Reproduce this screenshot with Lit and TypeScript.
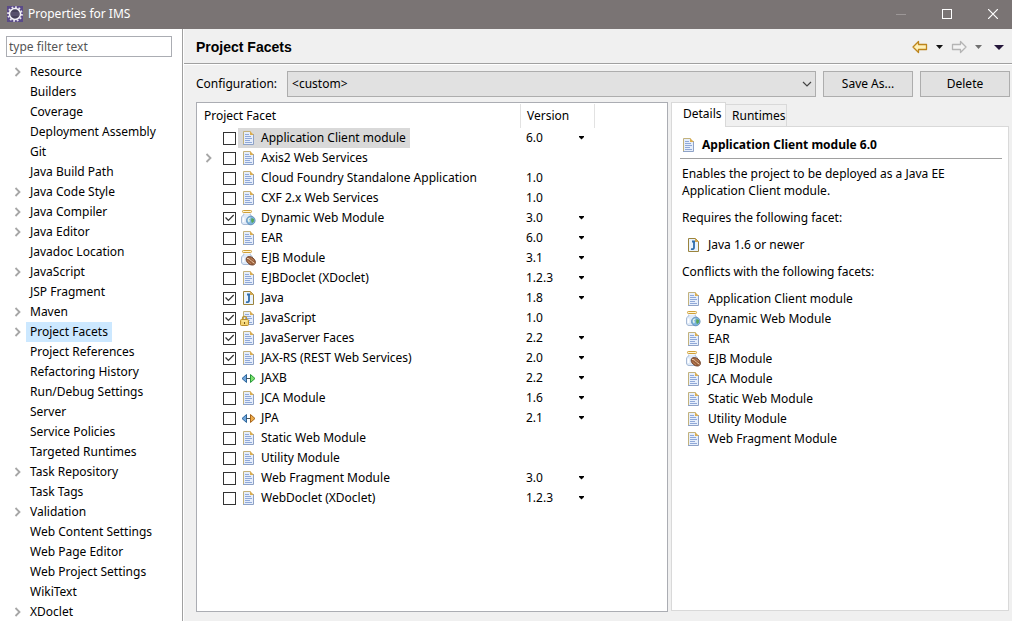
import { LitElement, html, css, svg, nothing } from "lit";
import { customElement, property } from "lit/decorators.js";
import { classMap } from "lit/directives/class-map.js";

interface Page {
  label: string;
  children?: boolean;
  selected?: boolean;
}

interface Facet {
  name: string;
  icon: string;
  version?: string;
  choices?: boolean;
  checked?: boolean;
  children?: boolean;
  selected?: boolean;
}

const PAGES: Page[] = [
  { label: "Resource", children: true },
  { label: "Builders" },
  { label: "Coverage" },
  { label: "Deployment Assembly" },
  { label: "Git" },
  { label: "Java Build Path" },
  { label: "Java Code Style", children: true },
  { label: "Java Compiler", children: true },
  { label: "Java Editor", children: true },
  { label: "Javadoc Location" },
  { label: "JavaScript", children: true },
  { label: "JSP Fragment" },
  { label: "Maven", children: true },
  { label: "Project Facets", children: true, selected: true },
  { label: "Project References" },
  { label: "Refactoring History" },
  { label: "Run/Debug Settings" },
  { label: "Server" },
  { label: "Service Policies" },
  { label: "Targeted Runtimes" },
  { label: "Task Repository", children: true },
  { label: "Task Tags" },
  { label: "Validation", children: true },
  { label: "Web Content Settings" },
  { label: "Web Page Editor" },
  { label: "Web Project Settings" },
  { label: "WikiText" },
  { label: "XDoclet", children: true },
];

const FACETS: Facet[] = [
  { name: "Application Client module", icon: "doc", version: "6.0", choices: true, selected: true },
  { name: "Axis2 Web Services", icon: "doc", children: true },
  { name: "Cloud Foundry Standalone Application", icon: "doc", version: "1.0" },
  { name: "CXF 2.x Web Services", icon: "doc", version: "1.0" },
  { name: "Dynamic Web Module", icon: "web", version: "3.0", choices: true, checked: true },
  { name: "EAR", icon: "doc", version: "6.0", choices: true },
  { name: "EJB Module", icon: "ejb", version: "3.1", choices: true },
  { name: "EJBDoclet (XDoclet)", icon: "doc", version: "1.2.3", choices: true },
  { name: "Java", icon: "java", version: "1.8", choices: true, checked: true },
  { name: "JavaScript", icon: "locked", version: "1.0", checked: true },
  { name: "JavaServer Faces", icon: "doc", version: "2.2", choices: true, checked: true },
  { name: "JAX-RS (REST Web Services)", icon: "doc", version: "2.0", choices: true, checked: true },
  { name: "JAXB", icon: "jaxb", version: "2.2", choices: true },
  { name: "JCA Module", icon: "doc", version: "1.6", choices: true },
  { name: "JPA", icon: "jpa", version: "2.1", choices: true },
  { name: "Static Web Module", icon: "doc" },
  { name: "Utility Module", icon: "doc" },
  { name: "Web Fragment Module", icon: "doc", version: "3.0", choices: true },
  { name: "WebDoclet (XDoclet)", icon: "doc", version: "1.2.3", choices: true },
];

const CONFLICTS = [
  { name: "Application Client module", icon: "doc" },
  { name: "Dynamic Web Module", icon: "web" },
  { name: "EAR", icon: "doc" },
  { name: "EJB Module", icon: "ejb" },
  { name: "JCA Module", icon: "doc" },
  { name: "Static Web Module", icon: "doc" },
  { name: "Utility Module", icon: "doc" },
  { name: "Web Fragment Module", icon: "doc" },
];

const sheet = svg`
  <path d="M3.5 1.5h7l3 3v10h-10z" fill="#e6eefb"/>
  <path d="M3.5 14V1.5h7" fill="none" stroke="#c3b27c"/>
  <path d="M13.5 4v10.5H3" fill="none" stroke="#8ea2c6"/>
  <path d="M10 1l4 4h-4z" fill="#d9ad52"/>
  <path d="M5 4.5h4M5 6.5h6M5 8.5h7M5 10.5h5M5 12.5h7" stroke="#8fa8d8"/>`;

const jar = svg`
  <path d="M4 3v1.500C2.500 5.500 1.500 6.500 1.500 8v4c0 1.500 1 2.500 2.500 2.500h6c1.500 0 2.500-1 2.500-2.500V8c0-1.500-1-2.500-2.500-3.500V3z" fill="#dfeaf8" stroke="#9db2d0" stroke-width=".9"/>
  <path d="M3.500 7.500v4.500" stroke="#fff" stroke-width="1.800"/>
  <path d="M3.500 3.500h7" stroke="#f3f6fa"/>
  <rect x="2.500" y=".5" width="9" height="2" rx=".8" fill="#fff6d4" stroke="#d0a03a"/>`;

const arrows = (right: string, edge: string) => svg`
  <path d="M6.500 4.500v8L2 8.500z" fill="#70a8e0" stroke="#2c6499"/>
  <path d="M6 8.500h5" stroke="#44535c"/>
  <path d="M10.500 4.500v8L15 8.500z" fill=${right} stroke=${edge}/>`;

const ICONS: Record<string, unknown> = {
  doc: sheet,
  web: svg`${jar}
    <circle cx="10.800" cy="10.500" r="4.300" fill="#7db4de" stroke="#5a86b0" stroke-width=".8"/>
    <path d="M8 8.500c1.500-1.500 3-1.300 2.500-.2L9 9.500l1 1.500-1 1.500C7.800 11.500 7.500 10 8 8.500z" fill="#e4f2e4"/>
    <path d="M11.500 8l2.500 1-.2 2.500-1.800 1.700-.9-2.500z" fill="#57a657"/>`,
  ejb: svg`${jar}
    <ellipse cx="10.800" cy="10.800" rx="5.200" ry="3.600" transform="rotate(38 10.800 10.800)" fill="#9a603c" stroke="#6d4029" stroke-width=".8"/>
    <path d="M7 8.300c3.500.2 3.500 3 7.500 5" fill="none" stroke="#f1cda9"/>
    <path d="M7.500 11l3.500 2.800M10.500 8l3.500 2.500" stroke="#c48a61" stroke-width=".8"/>`,
  java: svg`
    <path d="M3.500 1.500h7l3 3v10h-10z" fill="#e9f3fd" stroke="#9b843e"/>
    <path d="M10 1l4 4h-4z" fill="#d2a74f"/>
    <path d="M7 4.500h3M9 4v6.500c0 1.500-1 2-3 1.500" fill="none" stroke="#2f6caa" stroke-width="1.800"/>`,
  locked: svg`${sheet}
    <path d="M2.500 10V8.500a2 2 0 0 1 4 0V10" fill="none" stroke="#b8963a" stroke-width="1.300"/>
    <rect x=".5" y="9.500" width="8" height="6" rx="1" fill="#f3d474" stroke="#b98d2c"/>
    <path d="M2 11h5" stroke="#fff0ab"/><path d="M4.500 12v2" stroke="#73551c"/>`,
  jaxb: arrows("#7fe36d", "#28993a"),
  jpa: arrows("#efae4c", "#a8661c"),
};

const icon = (name: string) =>
  html`<svg class="icon" width="16" height="16" viewBox="0 0 16 16" aria-hidden="true">${ICONS[name]}</svg>`;

const chevron = html`<svg class="chevron" width="8" height="10" viewBox="0 0 8 10" aria-hidden="true">
  <path d="M1.500 1l4 4-4 4" fill="none" stroke="#a6a6a6" stroke-width="1.800" />
</svg>`;

const caret = (color: string, w = 5) => html`<svg class="caret" width="7" height="4" viewBox="0 0 7 4" aria-hidden="true">
  <path d=${w > 5 ? "M0 0h7L3.500 4z" : "M1 0h5v1L3.500 3.500 1 1z"} fill=${color} />
</svg>`;

const shared = css`
  * { box-sizing: border-box; }
  button, input, select { font: inherit; color: inherit; margin: 0; border-radius: 0; }
  select, input { appearance: none; }
  svg { display: block; flex: none; }
  .plain { border: 0; padding: 0; background: none; }
`;

@customElement("page-tree")
class PageTree extends LitElement {
  static styles = [shared, css`
    :host { display: block; padding: 7px 10px 0 6px; background: #fff; overflow: hidden; }
    .filter { display: block; width: 100%; height: 21px; border: 1px solid #abadb3; padding: 0 2px; outline: 0; background: #fff; }
    .filter::placeholder { color: #555; opacity: 1; }
    .tree { list-style: none; margin: 5px 0 0; padding: 0; }
    .node { display: flex; align-items: center; height: 20px; }
    .twist { width: 20px; padding-left: 8px; }
    .link { color: #000; text-decoration: none; line-height: 20px; padding: 0 4px; white-space: nowrap; }
    .selected { background: #cce8ff; }
  `];

  render() {
    return html`
      <input class="filter" type="text" aria-label="Filter" placeholder="type filter text" />
      <ul class="tree">
        ${PAGES.map((p) => html`<li class="node">
          <span class="twist">${p.children ? chevron : nothing}</span>
          <a class=${classMap({ link: true, selected: !!p.selected })} href="#">${p.label}</a>
        </li>`)}
      </ul>`;
  }
}

@customElement("facet-table")
class FacetTable extends LitElement {
  static styles = [shared, css`
    :host { display: block; background: #fff; border: 1px solid #abadb3; overflow: hidden; }
    .grid { width: 100%; border-collapse: collapse; table-layout: fixed; }
    .facet-col { width: 324px; }
    .version-col { width: 74px; }
    th { height: 25px; padding: 0 7px; font-weight: 400; text-align: left; }
    th + th { padding: 0 6px; }
    .split { background: linear-gradient(#e2e2e2, #e2e2e2) right 1px / 1px 24px no-repeat; }
    td { height: 20px; padding: 0; line-height: 20px; }
    .cell { display: flex; align-items: center; height: 20px; }
    .twist { width: 26px; padding-left: 8px; flex: none; }
    .check { width: 13px; height: 13px; border: 1px solid #333; background: #fff; display: grid; flex: none; }
    .check:checked::before { content: ""; background: #333; clip-path: polygon(10% 50%, 18% 42%, 40% 64%, 84% 18%, 92% 27%, 40% 80%); }
    .name { display: flex; align-items: center; gap: 5px; height: 20px; margin-left: 2px; padding: 0 4px 0 2px; white-space: nowrap; }
    .selected .name { background: #d9d9d9; }
    .version { padding-left: 5px; }
    .pick { display: grid; align-items: center; width: 59px; }
    .pick > * { grid-area: 1 / 1; }
    .pick .caret { justify-self: end; pointer-events: none; }
    .pick select { height: 20px; width: 100%; }
  `];

  render() {
    return html`<table class="grid">
      <colgroup><col class="facet-col" /><col class="version-col" /><col /></colgroup>
      <thead><tr>
        <th class="split" scope="col">Project Facet</th>
        <th class="split" scope="col">Version</th>
        <td></td>
      </tr></thead>
      <tbody>
        ${FACETS.map((f, i) => html`<tr class=${classMap({ selected: !!f.selected })}>
          <td><div class="cell">
            <span class="twist">${f.children ? chevron : nothing}</span>
            <input class="check" type="checkbox" id="facet-${i}" .checked=${!!f.checked} />
            <label class="name" for="facet-${i}">${icon(f.icon)}${f.name}</label>
          </div></td>
          <td class="version">${f.choices
            ? html`<div class="pick">
                <select class="plain" aria-label="${f.name} version"><option>${f.version}</option></select>
                ${caret("#000")}
              </div>`
            : f.version ?? nothing}</td>
          <td></td>
        </tr>`)}
      </tbody>
    </table>`;
  }
}

@customElement("facet-details")
class FacetDetails extends LitElement {
  @property() heading = "Application Client module 6.0";

  static styles = [shared, css`
    :host { display: flex; flex-direction: column; min-width: 0; }
    .tabs { display: flex; align-items: flex-end; height: 25px; margin-bottom: -1px; }
    .tab { border: 1px solid #d9d9d9; background: #f0f0f0; width: 61px; height: 23px; padding: 0; line-height: 20px; text-align: left; white-space: nowrap; }
    .tab.active { width: 55px; height: 25px; background: #fff; border-bottom: 0; padding: 0 0 2px 11px; z-index: 1; }
    .tab:not(.active) { border-left: 0; padding-left: 6px; }
    .panel { flex: 1; border: 1px solid #d9d9d9; background: #fff; padding: 9px 6px 0 8px; }
    .title { display: flex; align-items: center; gap: 6px; height: 23px; margin: 0; padding: 0 0 5px; border-bottom: 1px solid #a0a0a0; font-size: 12px; font-weight: 700; }
    .body { padding: 0 2px; }
    p { margin: 6px 0 9px; line-height: 17px; }
    p + p { margin-top: 10px; }
    ul + p { margin-top: 8px; }
    ul { list-style: none; margin: 0; padding: 0 0 0 3px; }
    li { display: flex; align-items: center; gap: 7px; height: 20px; }
  `];

  render() {
    return html`
      <div class="tabs" role="tablist">
        <button class="tab active" role="tab" aria-selected="true">Details</button>
        <button class="tab" role="tab" aria-selected="false">Runtimes</button>
      </div>
      <section class="panel">
        <h2 class="title">${icon("doc")}${this.heading}</h2>
        <div class="body">
          <p>Enables the project to be deployed as a Java EE Application Client module.</p>
          <p>Requires the following facet:</p>
          <ul><li>${icon("java")}Java 1.6 or newer</li></ul>
          <p>Conflicts with the following facets:</p>
          <ul>${CONFLICTS.map((c) => html`<li>${icon(c.icon)}${c.name}</li>`)}</ul>
        </div>
      </section>`;
  }
}

@customElement("app-root")
class AppRoot extends LitElement {
  static styles = [shared, css`
    :host {
      display: flex; flex-direction: column; height: 100vh; overflow: hidden;
      background: #f0f0f0; color: #000;
      font: 12px/20px "Noto Sans", "Noto Sans CJK SC", sans-serif;
    }
    .titlebar { display: flex; align-items: center; height: 29px; flex: none; background: #7a7474; color: #fff; padding-left: 7px; gap: 8px; }
    .brand { flex: 1; display: flex; align-items: center; gap: 5px; padding-bottom: 2px; }
    .win { width: 38px; height: 27px; display: grid; place-items: center; align-self: flex-start; }
    .content { flex: 1; min-height: 0; display: grid; grid-template-columns: 182px 1fr; }
    .main { display: flex; flex-direction: column; min-width: 0; border-left: 1px solid #a0a0a0; box-shadow: inset 1px 0 #fff; padding-left: 1px; }
    .head { display: flex; align-items: center; height: 35px; flex: none; padding: 2px 8px 0 12px; border-bottom: 1px solid #a0a0a0; box-shadow: 0 1px #fff; }
    .heading { flex: 1; margin: 0; font: 700 14px/20px "Liberation Sans", Arial, sans-serif; }
    .nav { display: flex; align-items: center; gap: 8px; }
    .nav button { display: grid; }
    .nav .menu { padding-left: 4px; }
    .config { display: flex; align-items: center; padding: 7px 2px 0 12px; gap: 7px; }
    .combo { flex: 1; display: grid; align-items: center; margin-left: 3px; }
    .combo > * { grid-area: 1 / 1; }
    .combo select { height: 26px; width: 100%; border: 1px solid #adadad; background: #e1e1e1; padding: 0 4px; }
    .combo svg { justify-self: end; margin-right: 4px; pointer-events: none; }
    .push { width: 90px; height: 26px; border: 1px solid #adadad; background: #e1e1e1; padding: 0; }
    .panes { flex: 1; min-height: 0; display: grid; grid-template-columns: 472fr 338fr; gap: 3px; padding: 5px 3px 9px 12px; }
    facet-details { padding-bottom: 1px; }
  `];

  render() {
    return html`
      <header class="titlebar">
        <div class="brand">
          <svg width="16" height="16" viewBox="0 0 16 16" aria-hidden="true">
            <rect width="16" height="16" fill="#5a4a88" />
            <circle cx="8" cy="8" r="6.900" fill="none" stroke="#e8e5ee" stroke-width="1.800" stroke-dasharray="1.800 1.800" />
            <circle cx="8" cy="8" r="5.500" fill="#47415a" stroke="#f4f2f7" stroke-width="1.500" />
            <path d="M4 7h8M4 9h8" stroke="#6a6180" />
          </svg>
          <span>Properties for IMS</span>
        </div>
        <button class="plain win" aria-label="Minimize"><svg width="10" height="10"><path d="M0 5.500h10" stroke="#9c9797" /></svg></button>
        <button class="plain win" aria-label="Maximize"><svg width="10" height="10"><rect x=".5" y=".5" width="9" height="9" fill="none" stroke="#fff" /></svg></button>
        <button class="plain win" aria-label="Close"><svg width="10" height="10"><path d="M0 0l10 10M10 0L0 10" stroke="#fff" stroke-width="1.200" /></svg></button>
      </header>
      <div class="content">
        <page-tree></page-tree>
        <main class="main">
          <div class="head">
            <h1 class="heading">Project Facets</h1>
            <div class="nav">
              <button class="plain" aria-label="Back"><svg width="16" height="14" viewBox="0 0 16 14"><path d="M1 7l5.500-5.500v3h8v5h-8v3z" fill="#fff1b8" stroke="#bd851c" stroke-width="1.300" stroke-linejoin="round" /></svg></button>
              <button class="plain" aria-label="Back history">${caret("#111", 7)}</button>
              <button class="plain" aria-label="Forward"><svg width="16" height="14" viewBox="0 0 16 14"><path d="M15 7l-5.500-5.500v3h-8v5h8v3z" fill="#f4f4f4" stroke="#b4b4b4" stroke-width="1.300" stroke-linejoin="round" /></svg></button>
              <button class="plain" aria-label="Forward history">${caret("#707070", 7)}</button>
              <button class="plain menu" aria-label="Menu"><svg width="10" height="5"><path d="M0 0h10L5 5z" fill="#24163a" /></svg></button>
            </div>
          </div>
          <div class="config">
            <label for="configuration">Configuration:</label>
            <div class="combo">
              <select id="configuration"><option>&lt;custom&gt;</option></select>
              <svg width="10" height="6" viewBox="0 0 10 6" aria-hidden="true"><path d="M1 1l4 4 4-4" fill="none" stroke="#444" stroke-width="1.200" /></svg>
            </div>
            <button class="push">Save As...</button>
            <button class="push">Delete</button>
          </div>
          <div class="panes">
            <facet-table></facet-table>
            <facet-details></facet-details>
          </div>
        </main>
      </div>`;
  }
}
